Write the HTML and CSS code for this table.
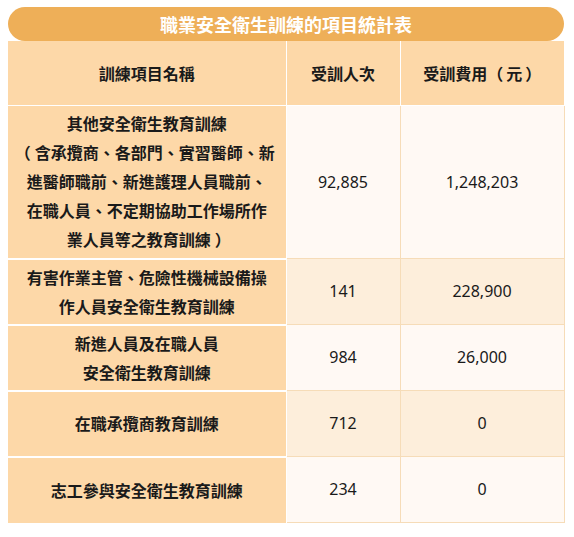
FILE: index.html
```html
<!DOCTYPE html>
<html lang="zh-Hant">
<head>
<meta charset="utf-8">
<title>職業安全衛生訓練的項目統計表</title>
<link rel="stylesheet" href="styles.css">
</head>
<body>
<div class="wrap">
  <div class="caption">職業安全衛生訓練的項目統計表</div>
  <table class="stats">
    <colgroup>
      <col class="c-name">
      <col class="c-count">
      <col class="c-cost">
    </colgroup>
    <thead>
      <tr class="head">
        <th>訓練項目名稱</th>
        <th>受訓人次</th>
        <th>受訓費用<span class="hpo">（</span>元<span class="hpc">）</span></th>
      </tr>
    </thead>
    <tbody>
      <tr class="light tall">
        <th>其他安全衛生教育訓練<br><span class="po">（</span>含承攬商、各部門、實習醫師、新<br>進醫師職前、新進護理人員職前、<br>在職人員、不定期協助工作場所作<br>業人員等之教育訓練<span class="pc">）</span></th>
        <td>92,885</td>
        <td>1,248,203</td>
      </tr>
      <tr class="alt">
        <th>有害作業主管、危險性機械設備操<br>作人員安全衛生教育訓練</th>
        <td>141</td>
        <td>228,900</td>
      </tr>
      <tr class="light">
        <th>新進人員及在職人員<br>安全衛生教育訓練</th>
        <td>984</td>
        <td>26,000</td>
      </tr>
      <tr class="alt">
        <th>在職承攬商教育訓練</th>
        <td>712</td>
        <td>0</td>
      </tr>
      <tr class="light">
        <th>志工參與安全衛生教育訓練</th>
        <td>234</td>
        <td>0</td>
      </tr>
    </tbody>
  </table>
</div>
</body>
</html>
```

FILE: styles.css
```css
html, body {
  margin: 0;
  padding: 0;
  background: #ffffff;
}
body {
  padding: 7px 8px 8px 8px;
  font-family: "Noto Sans", "Noto Sans CJK TC", sans-serif;
  color: #1a1a1a;
}
.wrap {
  width: 556px;
}
.caption {
  height: 34px;
  line-height: 34px;
  border-radius: 17px;
  background: #eeaf58;
  color: #ffffff;
  font-family: "Noto Sans CJK TC", sans-serif;
  font-weight: 700;
  font-size: 18px;
  text-align: center;
}
.stats {
  width: 556px;
  border-collapse: collapse;
  table-layout: fixed;
  font-size: 16px;
}
.c-name { width: 278px; }
.c-count { width: 114px; }
.c-cost { width: 164px; }
.stats th {
  background: #fdd8a8;
  font-family: "Noto Sans CJK TC", sans-serif;
  font-weight: 700;
  color: #1a1a1a;
  border: 1px solid #ffffff;
  border-top: 0;
  text-align: center;
  vertical-align: middle;
  line-height: 29px;
  padding: 2px 6px;
}
.po {
  display: inline-block;
  margin-left: -4px;
  margin-right: 4px;
}
.pc {
  display: inline-block;
  margin-left: 4px;
  margin-right: -4px;
}
.hpo {
  display: inline-block;
  margin-right: 3px;
}
.hpc {
  display: inline-block;
  margin-left: 3px;
}
.stats th:first-child { border-left: 0; }
.head th {
  height: 60px;
  border-top: 0;
}
.head th:last-child { border-right: 0; }
.stats tbody th {
  border-bottom: 2px solid #ffffff;
}
.stats tbody tr:last-child th {
  border-bottom: 0;
}
.stats td {
  font-family: "Noto Sans", sans-serif;
  color: #1a1a1a;
  text-align: center;
  vertical-align: middle;
  border: 1px solid #f6dcb8;
  border-top: 0;
  padding: 2px 8px;
  line-height: 29px;
}
.stats tbody tr { height: 66px; }
.stats tbody tr.tall { height: 153px; }
.light td { background: #fff9f4; }
.alt td { background: #fdeedb; }
.stats tbody tr td:last-child { border-right: 1px solid #f6dcb8; }
```
